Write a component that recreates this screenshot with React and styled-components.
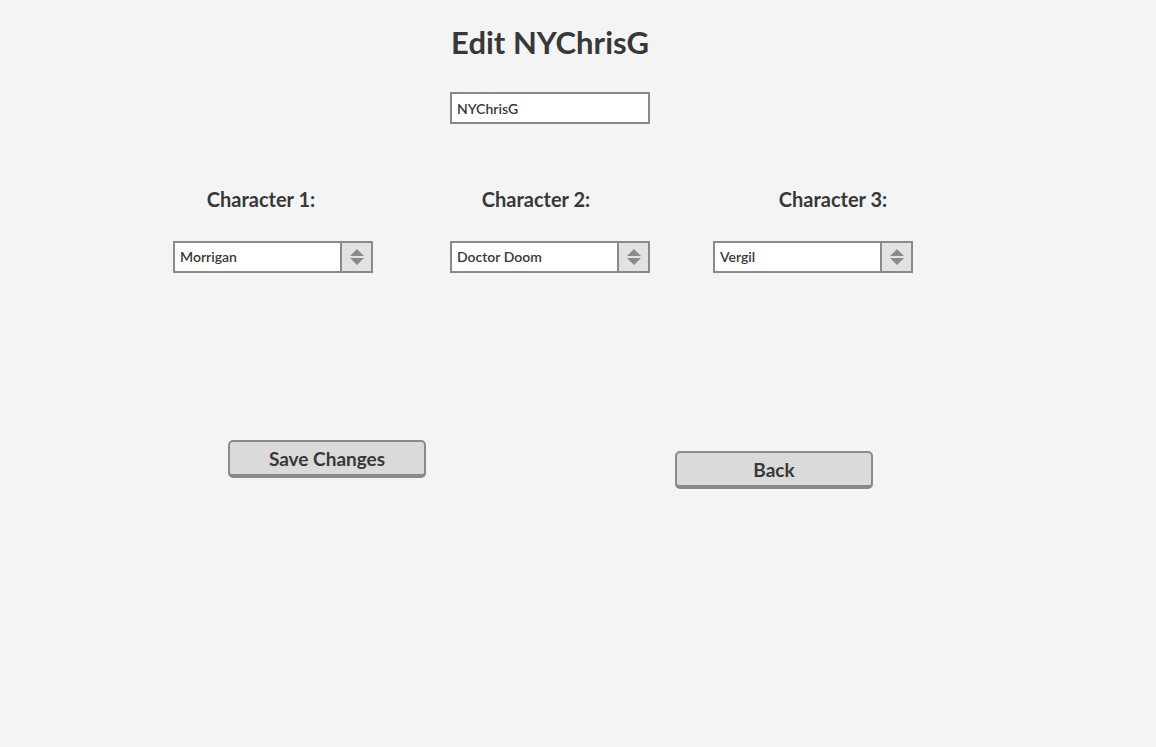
import styled, { createGlobalStyle } from 'styled-components'

const GlobalStyle = createGlobalStyle`
  html, body {
    margin: 0;
    padding: 0;
    background: #f4f4f4;
  }
  body {
    font-family: Lato, "Open Sans", sans-serif;
    color: #383838;
  }
`

const characters = [
  { label: 'Character 1:', value: 'Morrigan', ml: 173, shift: -12 },
  { label: 'Character 2:', value: 'Doctor Doom', ml: 77, shift: -14 },
  { label: 'Character 3:', value: 'Vergil', ml: 63, shift: 20 },
]

function Spinner() {
  return (
    <svg width="16" height="20" viewBox="0 0 16 20">
      <path d="M8 2 L15 9 L1 9 Z" fill="#8a8a8a" />
      <path d="M1 11 L15 11 L8 18 Z" fill="#8a8a8a" />
    </svg>
  )
}

export default function App() {
  return (
    <Page>
      <GlobalStyle />
      <Header>
        <Title>Edit NYChrisG</Title>
        <NameInput>NYChrisG</NameInput>
      </Header>

      <CharacterRow>
        {characters.map((c) => (
          <CharacterColumn key={c.label} $ml={c.ml}>
            <Label $shift={c.shift}>{c.label}</Label>
            <Select>
              <SelectValue>{c.value}</SelectValue>
              <SelectArrow>
                <Spinner />
              </SelectArrow>
            </Select>
          </CharacterColumn>
        ))}
      </CharacterRow>

      <ButtonRow>
        <Button $ml={228} $mt={0}>Save Changes</Button>
        <Button $ml={249} $mt={11}>Back</Button>
      </ButtonRow>
    </Page>
  )
}

const Page = styled.div`
  width: 1156px;
  height: 747px;
  display: flex;
  flex-direction: column;
`

const Header = styled.div`
  width: 1100px;
  display: flex;
  flex-direction: column;
  align-items: center;
  padding-top: 23px;
`

const Title = styled.h1`
  margin: 0;
  font-size: 31px;
  font-weight: 700;
  line-height: 38px;
  color: #383838;
`

const NameInput = styled.div`
  margin-top: 31px;
  width: 200px;
  height: 32px;
  box-sizing: border-box;
  border: 2px solid #8a8a8a;
  background: #fff;
  padding: 0 5px;
  display: flex;
  align-items: center;
  font-size: 14px;
  font-weight: 600;
  color: #383838;
`

const CharacterRow = styled.div`
  display: flex;
  margin-top: 63px;
`

const CharacterColumn = styled.div`
  width: 200px;
  margin-left: ${(p) => p.$ml}px;
  display: flex;
  flex-direction: column;
  align-items: center;
`

const Label = styled.div`
  font-size: 20px;
  font-weight: 700;
  line-height: 24px;
  transform: translateX(${(p) => p.$shift}px);
`

const Select = styled.div`
  margin-top: 30px;
  width: 200px;
  height: 32px;
  box-sizing: border-box;
  border: 2px solid #8a8a8a;
  background: #fff;
  display: flex;
`

const SelectValue = styled.div`
  flex: 1;
  padding: 0 5px 1px;
  display: flex;
  align-items: center;
  font-size: 14px;
  font-weight: 600;
  color: #383838;
`

const SelectArrow = styled.div`
  width: 29px;
  border-left: 2px solid #8a8a8a;
  background: #e2e2e2;
  display: flex;
  align-items: center;
  justify-content: center;
`

const ButtonRow = styled.div`
  display: flex;
  align-items: flex-start;
  margin-top: 167px;
`

const Button = styled.button`
  margin-left: ${(p) => p.$ml}px;
  margin-top: ${(p) => p.$mt}px;
  width: 198px;
  height: 38px;
  box-sizing: border-box;
  background: #dadada;
  border: 2px solid #8a8a8a;
  border-bottom-width: 4px;
  border-radius: 5px;
  font-family: Lato, "Open Sans", sans-serif;
  font-size: 19px;
  font-weight: 700;
  color: #383838;
  padding: 0;
  cursor: pointer;
`
